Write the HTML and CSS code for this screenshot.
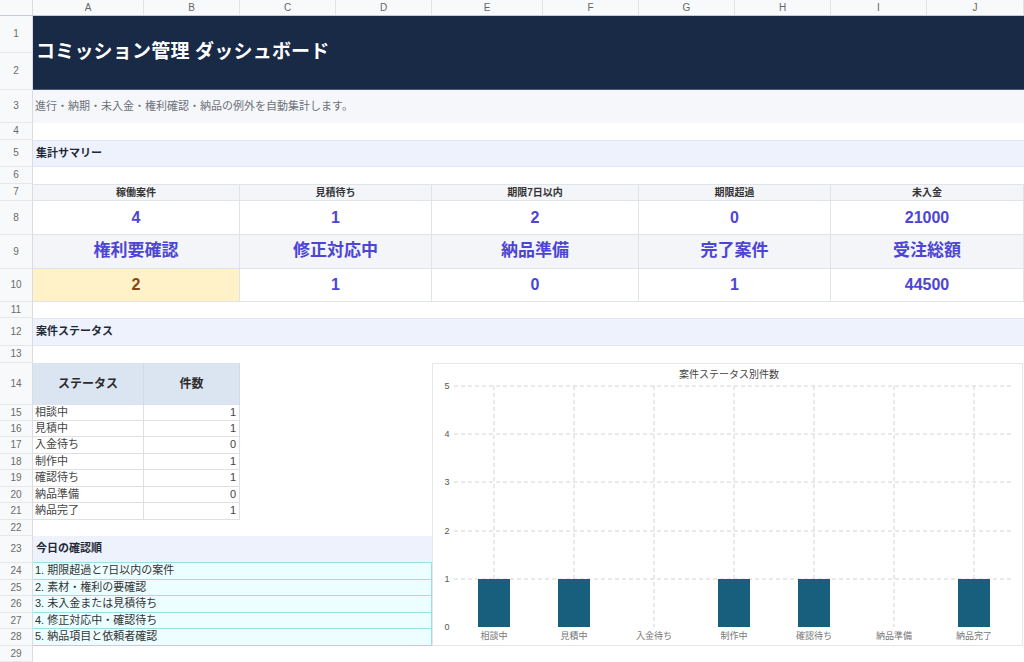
FILE: index.html
```html
<!DOCTYPE html>
<html lang="ja">
<head>
    <meta charset="UTF-8">
    <meta name="viewport" content="width=device-width, initial-scale=1.0">
    <title>コミッション管理 ダッシュボード</title>
    <link rel="stylesheet" href="styles.css">
</head>
<body>
    <div class="sheet">
        <!-- cabeçalho das colunas -->
        <div class="row colheads">
            <div class="corner"></div>
            <div class="colhead">A</div>
            <div class="colhead">B</div>
            <div class="colhead">C</div>
            <div class="colhead">D</div>
            <div class="colhead">E</div>
            <div class="colhead">F</div>
            <div class="colhead">G</div>
            <div class="colhead">H</div>
            <div class="colhead">I</div>
            <div class="colhead">J</div>
        </div>

        <div class="row h74">
            <div class="rn-stack"><div class="rn">1</div><div class="rn">2</div></div>
            <div class="title span10">コミッション管理 ダッシュボード</div>
        </div>
        <div class="row h33">
            <div class="rn">3</div>
            <div class="subtitle span10">進行・納期・未入金・権利確認・納品の例外を自動集計します。</div>
        </div>
        <div class="row h17"><div class="rn">4</div><div class="span10"></div></div>
        <div class="row h27">
            <div class="rn">5</div>
            <div class="section span10">集計サマリー</div>
        </div>
        <div class="row h17"><div class="rn">6</div><div class="span10"></div></div>

        <div class="row h17">
            <div class="rn">7</div>
            <div class="kpi-label span2">稼働案件</div>
            <div class="kpi-label span2">見積待ち</div>
            <div class="kpi-label span2">期限7日以内</div>
            <div class="kpi-label span2">期限超過</div>
            <div class="kpi-label span2">未入金</div>
        </div>
        <div class="row h34">
            <div class="rn">8</div>
            <div class="kpi-value span2">4</div>
            <div class="kpi-value span2">1</div>
            <div class="kpi-value span2">2</div>
            <div class="kpi-value span2">0</div>
            <div class="kpi-value span2">21000</div>
        </div>
        <div class="row h34">
            <div class="rn">9</div>
            <div class="kpi-big span2">権利要確認</div>
            <div class="kpi-big span2">修正対応中</div>
            <div class="kpi-big span2">納品準備</div>
            <div class="kpi-big span2">完了案件</div>
            <div class="kpi-big span2">受注総額</div>
        </div>
        <div class="row h33">
            <div class="rn">10</div>
            <div class="kpi-value warn span2">2</div>
            <div class="kpi-value span2">1</div>
            <div class="kpi-value span2">0</div>
            <div class="kpi-value span2">1</div>
            <div class="kpi-value span2">44500</div>
        </div>
        <div class="row h16"><div class="rn">11</div><div class="span10"></div></div>
        <div class="row h28">
            <div class="rn">12</div>
            <div class="section span10">案件ステータス</div>
        </div>
        <div class="row h17"><div class="rn">13</div><div class="span10"></div></div>

        <div class="row h42">
            <div class="rn">14</div>
            <div class="th">ステータス</div>
            <div class="th">件数</div>
            <div class="span8"></div>
        </div>
        <div class="row h16"><div class="rn">15</div><div class="td">相談中</div><div class="td num">1</div><div class="span8"></div></div>
        <div class="row h16"><div class="rn">16</div><div class="td">見積中</div><div class="td num">1</div><div class="span8"></div></div>
        <div class="row h17"><div class="rn">17</div><div class="td">入金待ち</div><div class="td num">0</div><div class="span8"></div></div>
        <div class="row h16"><div class="rn">18</div><div class="td">制作中</div><div class="td num">1</div><div class="span8"></div></div>
        <div class="row h17"><div class="rn">19</div><div class="td">確認待ち</div><div class="td num">1</div><div class="span8"></div></div>
        <div class="row h16"><div class="rn">20</div><div class="td">納品準備</div><div class="td num">0</div><div class="span8"></div></div>
        <div class="row h17"><div class="rn">21</div><div class="td">納品完了</div><div class="td num">1</div><div class="span8"></div></div>
        <div class="row h16"><div class="rn">22</div><div class="span10"></div></div>

        <div class="row h27">
            <div class="rn">23</div>
            <div class="todo-head span4">今日の確認順</div>
            <div class="span6"></div>
        </div>
        <div class="row h17"><div class="rn">24</div><div class="todo span4">1. 期限超過と7日以内の案件</div><div class="span6"></div></div>
        <div class="row h16"><div class="rn">25</div><div class="todo span4">2. 素材・権利の要確認</div><div class="span6"></div></div>
        <div class="row h17"><div class="rn">26</div><div class="todo span4">3. 未入金または見積待ち</div><div class="span6"></div></div>
        <div class="row h16"><div class="rn">27</div><div class="todo span4">4. 修正対応中・確認待ち</div><div class="span6"></div></div>
        <div class="row h17"><div class="rn">28</div><div class="todo span4">5. 納品項目と依頼者確認</div><div class="span6"></div></div>
        <div class="row h16"><div class="rn">29</div><div class="span10"></div></div>

        <!-- gráfico flutuante sobre as células E14:J28 -->
        <div class="chart">
            <svg width="591" height="283" viewBox="0 0 591 283">
                <text class="chart-title" x="296" y="14" text-anchor="middle">案件ステータス別件数</text>
                <g class="grid">
                    <line x1="21" y1="22" x2="580" y2="22"/>
                    <line x1="21" y1="70" x2="580" y2="70"/>
                    <line x1="21" y1="118" x2="580" y2="118"/>
                    <line x1="21" y1="167" x2="580" y2="167"/>
                    <line x1="21" y1="215" x2="580" y2="215"/>
                    <line x1="61" y1="22" x2="61" y2="263"/>
                    <line x1="141" y1="22" x2="141" y2="263"/>
                    <line x1="221" y1="22" x2="221" y2="263"/>
                    <line x1="301" y1="22" x2="301" y2="263"/>
                    <line x1="381" y1="22" x2="381" y2="263"/>
                    <line x1="461" y1="22" x2="461" y2="263"/>
                    <line x1="541" y1="22" x2="541" y2="263"/>
                </g>
                <g class="ylabels" text-anchor="middle">
                    <text x="14" y="25">5</text>
                    <text x="14" y="73">4</text>
                    <text x="14" y="121">3</text>
                    <text x="14" y="170">2</text>
                    <text x="14" y="218">1</text>
                    <text x="14" y="266">0</text>
                </g>
                <g class="bars">
                    <rect x="45" y="215" width="32" height="48"/>
                    <rect x="125" y="215" width="32" height="48"/>
                    <rect x="285" y="215" width="32" height="48"/>
                    <rect x="365" y="215" width="32" height="48"/>
                    <rect x="525" y="215" width="32" height="48"/>
                </g>
                <g class="xlabels" text-anchor="middle">
                    <text x="61" y="275">相談中</text>
                    <text x="141" y="275">見積中</text>
                    <text x="221" y="275">入金待ち</text>
                    <text x="301" y="275">制作中</text>
                    <text x="381" y="275">確認待ち</text>
                    <text x="461" y="275">納品準備</text>
                    <text x="541" y="275">納品完了</text>
                </g>
            </svg>
        </div>
    </div>
</body>
</html>
```

FILE: styles.css
```css
* {
    margin: 0;
    padding: 0;
    box-sizing: border-box;
}
body {
    width: 1024px;
    height: 662px;
    overflow: hidden;
    background-color: #fff;
    font-family: "Liberation Sans", "Noto Sans CJK JP", sans-serif;
    color: #333;
}
.sheet {
    position: relative; /* para o gráfico flutuante */
    width: 1024px;
}
.row {
    display: grid;
    grid-template-columns: 33px 111px 96px 96px 96px 111px 96px 96px 96px 96px 97px;
    grid-template-rows: minmax(0, 1fr); /* a linha não cresce com o texto */
    line-height: 1.2;
}
.row > div {
    min-height: 0;
    overflow: hidden;
}

/* alturas das linhas */
.h16 { height: 16px; }
.h17 { height: 17px; }
.h27 { height: 27px; }
.h28 { height: 28px; }
.h33 { height: 33px; }
.h34 { height: 34px; }
.h42 { height: 42px; }
.h74 { height: 74px; }

.span2 { grid-column: span 2; }
.span4 { grid-column: span 4; }
.span6 { grid-column: span 6; }
.span8 { grid-column: span 8; }
.span10 { grid-column: span 10; }

/* cabeçalhos da planilha */
.colheads {
    height: 16px;
    background-color: #f8f9fa;
    border-bottom: 1px solid #c7cbd1;
}
.corner {
    border-right: 1px solid #dadce0;
}
.colhead {
    display: flex;
    align-items: center;
    justify-content: center;
    font-size: 10px;
    color: #666;
    border-right: 1px solid #e2e3e5;
}
.rn-stack {
    display: flex;
    flex-direction: column;
}
.rn {
    flex: 1;
    display: flex;
    align-items: center;
    justify-content: center;
    background-color: #f8f9fa;
    border-right: 1px solid #dadce0;
    border-bottom: 1px solid #e6e7e9;
    font-size: 10px;
    color: #6b6b6b;
}

/* título */
.title {
    display: flex;
    align-items: center;
    padding-left: 3px;
    background-color: #182a46;
    border-bottom: 1px solid #4a5a72;
    color: #fff;
    font-size: 19px;
    font-weight: 700;
    letter-spacing: 0.2px;
}
.subtitle {
    display: flex;
    align-items: center;
    padding-left: 2px;
    background-color: #f5f7fb;
    color: #6d7178;
    font-size: 11px;
}
.section {
    display: flex;
    align-items: center;
    padding-left: 3px;
    background-color: #eef2fc;
    border-top: 1px solid #e0e6f3;
    border-bottom: 1px solid #e0e6f3;
    font-size: 11px;
    font-weight: 700;
    color: #1f2937;
}

/* resumo */
.kpi-label,
.kpi-value,
.kpi-big {
    display: flex;
    align-items: center;
    justify-content: center;
    border-right: 1px solid #dfe3ea;
    border-bottom: 1px solid #dfe3ea;
}
.kpi-label {
    background-color: #f3f5f9;
    border-top: 1px solid #dfe3ea;
    font-size: 10px;
    font-weight: 700;
    color: #333;
}
.kpi-value {
    background-color: #fff;
    font-size: 16px;
    font-weight: 700;
    color: #4d45d3;
}
.kpi-big {
    background-color: #f3f5f9;
    font-size: 17px;
    font-weight: 700;
    color: #4d45d3;
}
.kpi-value.warn {
    background-color: #fff2c8;
    color: #8a4513;
}

/* tabela de status */
.th {
    display: flex;
    align-items: center;
    justify-content: center;
    background-color: #dbe5f1;
    border-right: 1px solid #d2dae5;
    font-size: 12px;
    font-weight: 700;
    color: #2b2b2b;
}
.td {
    display: flex;
    align-items: center;
    padding-left: 2px;
    border-right: 1px solid #dedfe2;
    border-bottom: 1px solid #dedfe2;
    font-size: 11px;
    color: #444;
}
.td.num {
    justify-content: flex-end;
    padding-right: 3px;
}

/* lista de hoje */
.todo-head {
    display: flex;
    align-items: center;
    padding-left: 3px;
    background-color: #eef2fc;
    border-bottom: 1px solid #9edde8;
    font-size: 11px;
    font-weight: 700;
    color: #1f2937;
}
.todo {
    display: flex;
    align-items: center;
    padding-left: 2px;
    background-color: #ecfeff;
    border-right: 1px solid #9edde8;
    border-bottom: 1px solid #9edde8;
    font-size: 11px;
    color: #333;
}

/* gráfico */
.chart {
    position: absolute;
    left: 432px;
    top: 363px;
    width: 591px;
    height: 283px;
    background-color: #fff;
    border: 1px solid #e6e6e6;
}
.chart svg {
    display: block;
    font-family: "Liberation Sans", "Noto Sans CJK JP", sans-serif;
}
.chart-title {
    font-size: 10px;
    fill: #444;
}
.grid line {
    stroke: #d3d3d3;
    stroke-width: 1;
    stroke-dasharray: 4 3;
}
.ylabels text {
    font-size: 9px;
    fill: #555;
}
.xlabels text {
    font-size: 9px;
    fill: #777;
}
.bars rect {
    fill: #185f7e;
}
```
